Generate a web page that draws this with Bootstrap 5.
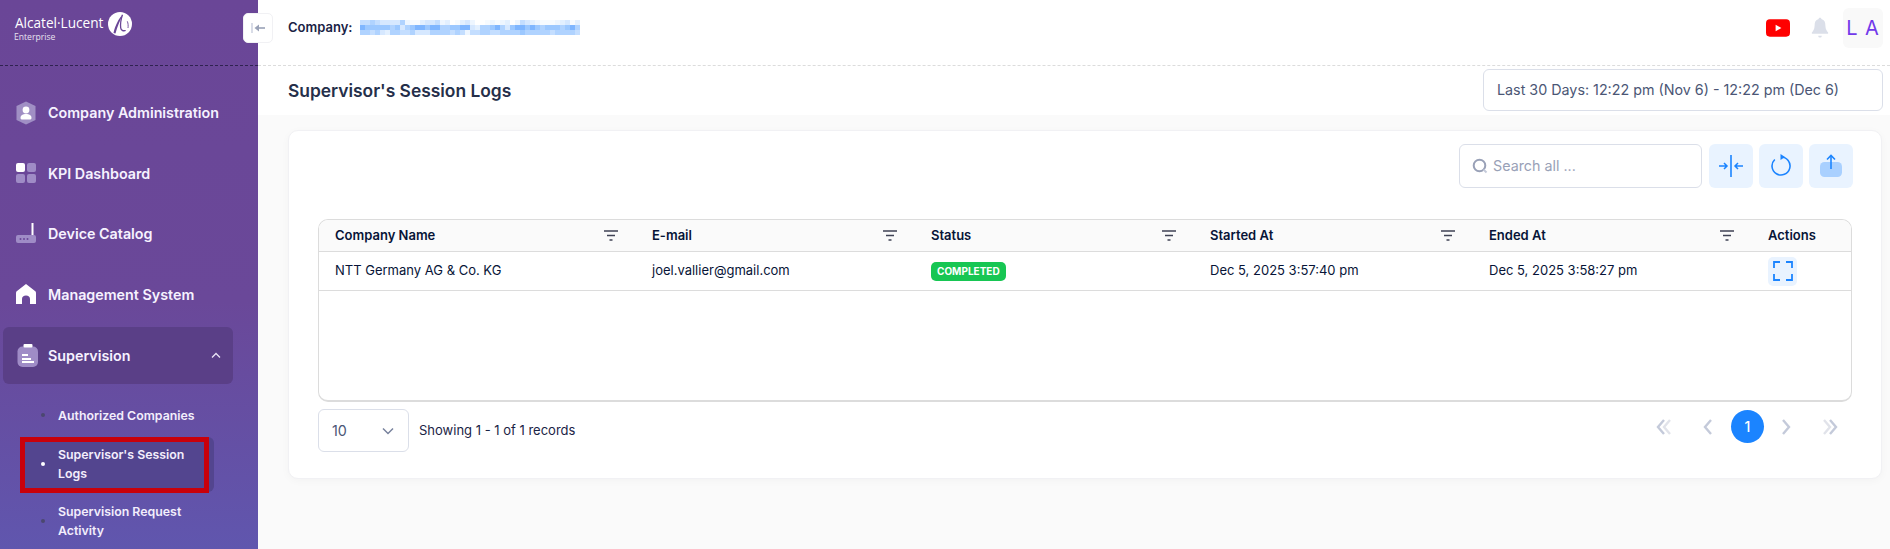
<!DOCTYPE html>
<html lang="en">
<head>
    <meta charset="UTF-8">
    <meta name="viewport" content="width=device-width, initial-scale=1.0">
    <title>Supervisor's Session Logs</title>
    <link href="https://cdn.jsdelivr.net/npm/bootstrap@5.3.2/dist/css/bootstrap.min.css" rel="stylesheet">
    <script src="https://cdn.jsdelivr.net/npm/bootstrap@5.3.2/dist/js/bootstrap.bundle.min.js"></script>
    <style>
        html, body { height: 549px; overflow: hidden; }
        body { font-family: Inter, "Liberation Sans", sans-serif; background: #fafafa; color: #071437; }

        /* sidebar */
        .side-panel { width: 258px; height: 549px; flex: none; background: linear-gradient(180deg, #6a4697 0%, #6a4899 55%, #6056ae 100%); position: relative; overflow: hidden; }
        .side-brand { height: 66px; border-bottom: 1px dashed #2f2350; padding: 12px 0 0 15px; color: #fff; }
        .brand-name { font-family: "Open Sans", sans-serif; font-weight: 400; font-size: 13.6px; line-height: 18px; margin-top: 2px; }
        .brand-sub { font-family: "Open Sans", sans-serif; font-weight: 400; font-size: 8.6px; line-height: 11px; margin-left: -1px; opacity: .85; }
        .brand-mark { margin: 0 0 0 5px; align-self: flex-start; }
        .side-menu { padding: 16.5px 25px 0 3px; }
        .menu-row { height: 60.5px; padding-left: 11px; gap: 10px; font-size: 14.3px; font-weight: 600; color: #f6f2ff; text-decoration: none; }
        .menu-row.is-open { height: 57px; margin-top: 2.5px; background: #5a3f87; border-radius: 6px; padding-right: 12px; }
        .menu-ico { width: 24px; height: 24px; flex: none; }
        .sub-menu { padding: 21.5px 0 0 19px; }
        .sub-row { width: 192px; padding: 0 8px 0 36px; font-size: 12.35px; line-height: 19px; font-weight: 600; color: #f3eefc; position: relative; text-decoration: none; }
        .sub-row::before { content: ""; position: absolute; left: 19px; top: 50%; width: 4px; height: 4px; margin-top: -2px; border-radius: 50%; background: #4b4770; }
        .sub-row.is-active { background: #53458f; border-radius: 6px; height: 55px; margin: 12px 0 10px; }
        .sub-row.is-active::before { background: #fff; }
        .red-mark { position: absolute; left: 20px; top: 437px; width: 189px; height: 56px; border: 5px solid #c9000b; }

        /* header */
        .main-area { min-width: 0; height: 549px; }
        .top-bar { height: 66px; background: #fff; border-bottom: 1px dashed #dcdcdc; padding: 8px 7px 0 30px; }
        .collapse-btn { position: absolute; left: 243px; top: 13px; width: 30px; height: 30px; background: #fff; border: 1px solid #f1f1f4; border-radius: 5px; z-index: 2; }
        .company-label { font-size: 13px; font-weight: 600; color: #1a2345; margin-top: 10px; }
        .bell-ico { margin: 0 14px 0 21px; }
        .user-tile { width: 40px; height: 40px; background: #f9f9f9; border-radius: 6px; color: #7239ea; font-size: 20px; letter-spacing: 1px; }
        .title-bar { height: 49px; background: #fff; padding: 3px 7px 4px 30px; }
        .page-title { font-size: 17.4px; font-weight: 600; color: #252f4a; margin: 2px 0 0; }
        .date-box { width: 400px; height: 42px; padding-left: 13px; border: 1px solid #dbdfe9; border-radius: 6px; font-size: 14.3px; color: #4b5675; }

        /* content */
        .content-wrap { padding: 15px 8px 0 30px; }
        .log-card { height: 349px; border: 1px solid #f1f1f4; border-radius: 10px; padding: 13px 29px 0; box-shadow: 0 2px 8px rgba(0,0,0,.03); }
        .tool-row { gap: 6px; margin-right: -1px; }
        .search-box { width: 243px; height: 44px; padding-left: 12px; gap: 5px; margin-right: 1px; border: 1px solid #dbdfe9; border-radius: 6px; background: #fff; }
        .search-box input { border: 0; outline: 0; padding: 0; flex: 1; min-width: 0; font-size: 14.3px; color: #4b5675; background: transparent; }
        .search-box input::placeholder { color: #99a1b7; }
        .tool-btn { width: 44px; height: 44px; padding: 0; border: 0; border-radius: 6px; background: #e9f3ff; }
        .table-box { height: 183px; margin-top: 31px; border: 1px solid #dcdcdc; border-bottom-width: 2px; border-radius: 10px; overflow: hidden; }
        .log-table { table-layout: fixed; width: 100%; font-size: 13px; color: #071437; }
        .log-table th { height: 31px; padding: 1px 16px 0; background: #fafafa; font-weight: 600; border-bottom: 1px solid #dcdcdc; vertical-align: middle; }
        .log-table td { height: 39px; padding: 1px 16px 0; font-weight: 400; border-bottom: 1px solid #dcdcdc; vertical-align: middle; }
        .head-cell { padding-right: 2px; }
        .w-first { width: 317px; }
        .w-col { width: 279px; }
        .status-pill { display: inline-block; padding: 0 6px; height: 19px; line-height: 19px; border-radius: 5px; background: #17c653; color: #fff; font-size: 10px; font-weight: 700; }
        .view-btn { display: flex; align-items: center; justify-content: center; width: 29px; height: 29px; padding: 0; border: 0; border-radius: 5px; background: #e9f3ff; }
        .foot-row { margin-top: 7px; }
        .size-select { width: 91px; height: 43px; padding: 0 0 0 13px; font-size: 14.3px; color: #4b5675; border-color: #dbdfe9; background-position: right 13px center; background-size: 14px 10px;
            background-image: url("data:image/svg+xml,%3csvg xmlns='http://www.w3.org/2000/svg' viewBox='0 0 14 10'%3e%3cpath fill='none' stroke='%2378829d' stroke-width='1.5' d='M2 2.500 7 7.500l5-5'/%3e%3c/svg%3e"); }
        .rec-info { font-size: 13px; color: #1a2345; margin-left: 10px; }
        .pager { margin: 1px 10px 0 0; height: 33px; }
        .page-dot { width: 33px; height: 33px; margin: 0 10px 0 11px; border-radius: 50%; background: #1b84ff; color: #fff; font-size: 14px; font-weight: 500; }
        .page-arrow { width: 24px; height: 24px; }
        .arrow-far { margin-left: 20px; }
    </style>
</head>
<body>
<div class="d-flex">
    <!-- Sidebar -->
    <aside class="side-panel">
        <div class="side-brand">
            <div class="d-flex align-items-start">
                <div>
                    <div class="brand-name">Alcatel·Lucent</div>
                    <div class="brand-sub">Enterprise</div>
                </div>
                <svg class="brand-mark" width="24" height="24" viewBox="0 0 24 24"><circle cx="12" cy="12" r="12" fill="#fff"/><path d="M14.500 2.800C11 6 7 14 5.500 21l2 .6C9 15 12 9 14.500 2.800z" fill="#6a4697"/><path d="M14.500 2.800c-1.600 4.500-2.300 9-1.800 13 .3 2.300 2.300 3.500 5 2.700" fill="none" stroke="#6a4697" stroke-width="1.300"/><path d="M19.300 9.300c.9 2.200 1 4.500.7 6.700" fill="none" stroke="#6a4697" stroke-width=".9"/></svg>
            </div>
        </div>
        <div class="side-menu">
            <a class="menu-row d-flex align-items-center" href="#">
                <svg class="menu-ico" viewBox="0 0 24 24"><path d="M12 .5 21.500 5v14L12 23.500 2.500 19V5z" fill="#a08fc4"/><circle cx="12" cy="9" r="3.400" fill="#fff"/><path d="M6.500 17c0-3 2.500-4 5.500-4s5.500 1 5.500 4c0 1-1 1.500-2 1.500h-7c-1 0-2-.5-2-1.500z" fill="#fff"/></svg>
                Company Administration
            </a>
            <a class="menu-row d-flex align-items-center" href="#">
                <svg class="menu-ico" viewBox="0 0 24 24"><rect x="2" y="2" width="9" height="9" rx="2" fill="#fff"/><rect x="13" y="2" width="9" height="9" rx="2" fill="#9f8cc6"/><rect x="2" y="13" width="9" height="9" rx="2" fill="#9f8cc6"/><rect x="13" y="13" width="9" height="9" rx="2" fill="#9f8cc6"/></svg>
                KPI Dashboard
            </a>
            <a class="menu-row d-flex align-items-center" href="#">
                <svg class="menu-ico" viewBox="0 0 24 24"><rect x="17.500" y="1" width="2" height="13" fill="#fff"/><rect x="2" y="13" width="20" height="8" rx="2" fill="#9f8cc6"/><circle cx="6.500" cy="17" r="1" fill="#6a4697"/><circle cx="10" cy="17" r="1" fill="#6a4697"/><circle cx="13.500" cy="17" r="1" fill="#6a4697"/></svg>
                Device Catalog
            </a>
            <a class="menu-row d-flex align-items-center" href="#">
                <svg class="menu-ico" viewBox="0 0 24 24"><path d="M12 2 21 9c1 .8 1 1.500 1 3v10h-6v-5c0-2-1.500-3.500-4-3.500S8 15 8 17v5H2V12c0-1.500 0-2.200 1-3z" fill="#fff"/></svg>
                Management System
            </a>
            <a class="menu-row is-open d-flex align-items-center" href="#">
                <svg class="menu-ico" viewBox="0 0 24 24"><rect x="3.500" y="2.500" width="20.500" height="20.500" rx="5" fill="#9f8cc6"/><rect x="9.500" y="0" width="9" height="3.500" rx="1" fill="#fff"/><rect x="8" y="10" width="6" height="2" fill="#fff"/><rect x="8" y="14" width="9" height="2" fill="#fff"/><rect x="8" y="17" width="12" height="2" fill="#fff"/></svg>
                <span class="flex-grow-1">Supervision</span>
                <svg width="10" height="7" viewBox="0 0 10 7"><path d="M1 5.500 5 1.500l4 4" fill="none" stroke="#e9e3f5" stroke-width="1.300"/></svg>
            </a>
            <div class="sub-menu">
                <a class="sub-row d-block" href="#">Authorized Companies</a>
                <a class="sub-row is-active d-flex align-items-center" href="#">Supervisor's Session Logs</a>
                <a class="sub-row d-block" href="#">Supervision Request Activity</a>
            </div>
        </div>
        <div class="red-mark"></div>
    </aside>

    <button class="collapse-btn btn d-flex align-items-center justify-content-center p-0" type="button" aria-label="Toggle sidebar">
        <svg width="14" height="12" viewBox="0 0 14 12"><path d="M1 1v10" stroke="#c4cada" stroke-width="1.300"/><path d="M3.500 6 8 2.500v7z" fill="#99a1b7"/><path d="M7 6h7" stroke="#99a1b7" stroke-width="1.600"/></svg>
    </button>

    <!-- Main -->
    <main class="main-area flex-grow-1 d-flex flex-column">
        <header class="top-bar d-flex align-items-start">
            <div class="d-flex align-items-center company-label">
                <span class="me-2">Company:</span>
                <svg width="220" height="18" id="blurName" aria-hidden="true"></svg>
            </div>
            <div class="ms-auto d-flex align-items-center">
                <svg width="24" height="18" viewBox="0 0 25 18"><rect width="25" height="18" rx="4" fill="#f00"/><path d="M10 5.500v7l6-3.500z" fill="#fff"/></svg>
                <svg class="bell-ico" width="18" height="22" viewBox="0 0 20 23"><path d="M10 0c1 0 1.500.6 1.500 1.500C15 2.500 16 5 16 9c0 4 2 6 3 7.500.4.800 0 1.500-1 1.500H2c-1 0-1.400-.7-1-1.500C2 15 4 13 4 9c0-4 1-6.500 4.500-7.500C8.500.6 9 0 10 0z" fill="#dbdfe9"/><path d="M8 20h4c0 1.500-1 2-2 2s-2-.5-2-2z" fill="#dbdfe9"/></svg>
                <div class="user-tile d-flex align-items-center justify-content-center">L A</div>
            </div>
        </header>

        <div class="title-bar d-flex align-items-center justify-content-between">
            <h1 class="page-title">Supervisor's Session Logs</h1>
            <div class="date-box d-flex align-items-center">Last 30 Days: 12:22 pm (Nov 6) - 12:22 pm (Dec 6)</div>
        </div>

        <div class="content-wrap">
            <div class="log-card card">
                <div class="tool-row d-flex justify-content-end">
                    <div class="search-box d-flex align-items-center">
                        <svg width="16" height="16" viewBox="0 0 16 16"><circle cx="7.500" cy="7.500" r="5.800" fill="none" stroke="#99a1b7" stroke-width="2"/><path d="m11.500 11.500 3 3" stroke="#c4cada" stroke-width="2"/></svg>
                        <input type="text" placeholder="Search all ...">
                    </div>
                    <button class="tool-btn btn d-flex align-items-center justify-content-center" type="button" aria-label="Collapse columns">
                        <svg width="26" height="22" viewBox="0 0 26 22"><path d="M13 0v22" stroke="#1b84ff" stroke-width="1.600"/><path d="M1 11h8M6 8l3 3-3 3M25 11h-8M20 8l-3 3 3 3" fill="none" stroke="#1b84ff" stroke-width="1.500"/></svg>
                    </button>
                    <button class="tool-btn btn d-flex align-items-center justify-content-center" type="button" aria-label="Refresh">
                        <svg width="20" height="24" viewBox="0 0 20 24"><path d="M10 3A9 9 0 1 1 3.800 5.500" fill="none" stroke="#1b84ff" stroke-width="1.600"/><path d="M9.500 0 14 3 9.500 6z" fill="#1b84ff"/></svg>
                    </button>
                    <button class="tool-btn btn d-flex align-items-center justify-content-center" type="button" aria-label="Export">
                        <svg width="22" height="24" viewBox="0 0 22 24"><rect y="8" width="22" height="15" rx="4.500" fill="#a9d0ff"/><path d="M11 2v13" stroke="#1b84ff" stroke-width="1.600"/><path d="M7 5.500 11 1.500l4 4" fill="none" stroke="#1b84ff" stroke-width="1.600"/></svg>
                    </button>
                </div>

                <div class="table-box">
                    <table class="log-table table mb-0">
                        <colgroup>
                            <col class="w-first"><col class="w-col"><col class="w-col"><col class="w-col"><col class="w-col"><col>
                        </colgroup>
                        <thead>
                            <tr>
                                <th><div class="head-cell d-flex justify-content-between align-items-center">Company Name <svg width="14" height="11" viewBox="0 0 14 11"><path d="M0 1h14M3 5.500h8M5.500 10h3" stroke="#3f4254" stroke-width="1.500"/></svg></div></th>
                                <th><div class="head-cell d-flex justify-content-between align-items-center">E-mail <svg width="14" height="11" viewBox="0 0 14 11"><path d="M0 1h14M3 5.500h8M5.500 10h3" stroke="#3f4254" stroke-width="1.500"/></svg></div></th>
                                <th><div class="head-cell d-flex justify-content-between align-items-center">Status <svg width="14" height="11" viewBox="0 0 14 11"><path d="M0 1h14M3 5.500h8M5.500 10h3" stroke="#3f4254" stroke-width="1.500"/></svg></div></th>
                                <th><div class="head-cell d-flex justify-content-between align-items-center">Started At <svg width="14" height="11" viewBox="0 0 14 11"><path d="M0 1h14M3 5.500h8M5.500 10h3" stroke="#3f4254" stroke-width="1.500"/></svg></div></th>
                                <th><div class="head-cell d-flex justify-content-between align-items-center">Ended At <svg width="14" height="11" viewBox="0 0 14 11"><path d="M0 1h14M3 5.500h8M5.500 10h3" stroke="#3f4254" stroke-width="1.500"/></svg></div></th>
                                <th>Actions</th>
                            </tr>
                        </thead>
                        <tbody>
                            <tr>
                                <td>NTT Germany AG &amp; Co. KG</td>
                                <td>joel.vallier@gmail.com</td>
                                <td><span class="status-pill">COMPLETED</span></td>
                                <td>Dec 5, 2025 3:57:40 pm</td>
                                <td>Dec 5, 2025 3:58:27 pm</td>
                                <td>
                                    <button class="view-btn" type="button" aria-label="View">
                                        <svg width="20" height="20" viewBox="0 0 20 20"><path d="M1 7V1h6M13 1h6v6M19 13v6h-6M7 19H1v-6" fill="none" stroke="#1b84ff" stroke-width="1.800"/></svg>
                                    </button>
                                </td>
                            </tr>
                        </tbody>
                    </table>
                </div>

                <div class="foot-row d-flex align-items-center">
                    <select class="size-select form-select">
                        <option>10</option>
                        <option>25</option>
                        <option>50</option>
                    </select>
                    <span class="rec-info">Showing 1 - 1 of 1 records</span>
                    <div class="pager ms-auto d-flex align-items-center align-self-start">
                        <svg class="page-arrow" viewBox="0 0 24 24"><path d="M18 5l-6 7 6 7" fill="none" stroke="#e1e3ea" stroke-width="2.400"/><path d="M12 5 6 12l6 7" fill="none" stroke="#c4cada" stroke-width="2.400"/></svg>
                        <svg class="page-arrow arrow-far" viewBox="0 0 24 24"><path d="M15 5l-6 7 6 7" fill="none" stroke="#c4cada" stroke-width="2.400"/></svg>
                        <div class="page-dot d-flex align-items-center justify-content-center">1</div>
                        <svg class="page-arrow" viewBox="0 0 24 24"><path d="M9 5l6 7-6 7" fill="none" stroke="#c4cada" stroke-width="2.400"/></svg>
                        <svg class="page-arrow arrow-far" viewBox="0 0 24 24"><path d="M6 5l6 7-6 7" fill="none" stroke="#e1e3ea" stroke-width="2.400"/><path d="M12 5l6 7-6 7" fill="none" stroke="#c4cada" stroke-width="2.400"/></svg>
                    </div>
                </div>
            </div>
        </div>
    </main>
</div>

<script>
    // pixelated company name, the reference has it masked
    var rows = [
        '44345555378865547698657998787697456788876586',
        '12222232532112113322115633213521121232223213',
        '33435633443555333343474433443333233333433334'
    ];
    var shades = ['#7fb6ff', '#9cc8ff', '#b0d3ff', '#c4deff', '#d6e8ff', '#e3f0ff', '#eef6ff', '#f7fbff', '#ffffff'];
    var svg = document.getElementById('blurName');
    var html = '';
    rows.forEach(function(row, y) {
        row.split('').forEach(function(c, x) {
            html += '<rect x="' + (x * 5) + '" y="' + (y * 5 + 1) + '" width="5" height="5" fill="' + shades[c - 1] + '"/>';
        });
    });
    svg.innerHTML = html;
</script>
</body>
</html>
